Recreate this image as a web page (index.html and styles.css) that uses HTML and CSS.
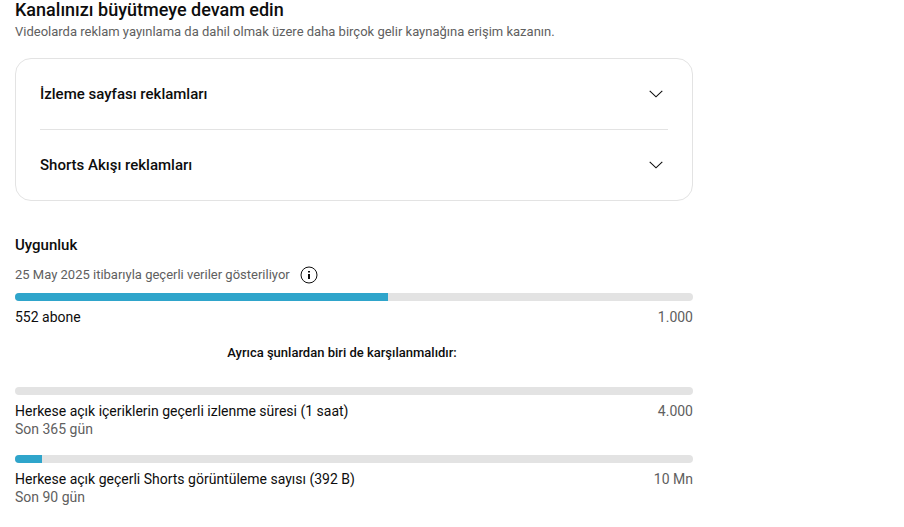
FILE: index.html
```html
<!DOCTYPE html>
<html lang="tr">
<head>
  <meta charset="UTF-8">
  <meta name="viewport" content="width=device-width, initial-scale=1.0">
  <title>Kanalınızı büyütmeye devam edin</title>
  <link rel="stylesheet" href="styles.css">
</head>
<body>
  <main class="container">
    <h1 class="title">Kanalınızı büyütmeye devam edin</h1>
    <p class="subtitle">Videolarda reklam yayınlama da dahil olmak üzere daha birçok gelir kaynağına erişim kazanın.</p>

    <div class="card">
      <button class="card-row" type="button" aria-expanded="false">
        <span>İzleme sayfası reklamları</span>
        <svg class="chevron" viewBox="0 0 24 24" aria-hidden="true"><path d="M5.7 8.8L12 14.8L18.3 8.8"/></svg>
      </button>
      <button class="card-row" type="button" aria-expanded="false">
        <span>Shorts Akışı reklamları</span>
        <svg class="chevron" viewBox="0 0 24 24" aria-hidden="true"><path d="M5.7 8.8L12 14.8L18.3 8.8"/></svg>
      </button>
    </div>

    <h2 class="section-title">Uygunluk</h2>
    <div class="date-row">
      <span>25 May 2025 itibarıyla geçerli veriler gösteriliyor</span>
      <button class="info-btn" type="button" aria-label="Bilgi">
        <svg viewBox="0 0 24 24" aria-hidden="true">
          <circle cx="12" cy="12" r="8"/>
          <path class="info-mark" d="M11 8h2v1.6h-2zM11 11h2v5h-2z"/>
        </svg>
      </button>
    </div>

    <section class="goal">
      <div class="bar" role="progressbar" aria-labelledby="subs" aria-valuenow="552" aria-valuemax="1000">
        <div class="bar-fill" style="width: 55%"></div>
      </div>
      <div class="goal-row">
        <span id="subs">552 abone</span>
        <span class="goal-muted">1.000</span>
      </div>
    </section>

    <p class="either">Ayrıca şunlardan biri de karşılanmalıdır:</p>

    <section class="goal">
      <div class="bar" role="progressbar" aria-labelledby="hours" aria-valuenow="1" aria-valuemax="4000">
        <div class="bar-fill" style="width: 0%"></div>
      </div>
      <div class="goal-row">
        <span id="hours">Herkese açık içeriklerin geçerli izlenme süresi (1 saat)</span>
        <span class="goal-muted">4.000</span>
      </div>
      <div class="goal-muted">Son 365 gün</div>
    </section>

    <section class="goal">
      <div class="bar" role="progressbar" aria-labelledby="shorts" aria-valuenow="392000" aria-valuemax="10000000">
        <div class="bar-fill" style="width: 4%"></div>
      </div>
      <div class="goal-row">
        <span id="shorts">Herkese açık geçerli Shorts görüntüleme sayısı (392 B)</span>
        <span class="goal-muted">10 Mn</span>
      </div>
      <div class="goal-muted">Son 90 gün</div>
    </section>
  </main>
</body>
</html>
```
FILE: styles.css
```css
* {
  box-sizing: border-box;
}

body {
  margin: 0;
  background: #fff;
  color: #0d0d0d;
  font-family: Roboto, Arial, sans-serif;
  font-size: 14px;
  line-height: 18px;
}

h1, h2, p {
  margin: 0;
}

button {
  border: none;
  background: none;
  padding: 0;
  color: inherit;
  font-family: inherit;
  cursor: pointer;
}

.container {
  width: 75%;
  margin-left: 15px;
}

.title {
  font-size: 18px;
  font-weight: 500;
  line-height: 20px;
}

.subtitle {
  margin-top: 2px;
  font-size: 13px;
  line-height: 20px;
  color: #606060;
}

/* Ad type list */
.card {
  margin-top: 16px;
  padding: 0 24px;
  border: 1px solid #e3e3e3;
  border-radius: 16px;
}

.card-row {
  display: flex;
  justify-content: space-between;
  align-items: center;
  width: 100%;
  padding: 23px 0;
  font-size: 15px;
  font-weight: 500;
  line-height: 24px;
  text-align: left;
}

.card-row + .card-row {
  border-top: 1px solid #e3e3e3;
}

.chevron {
  width: 24px;
  height: 24px;
  fill: none;
  stroke: #0d0d0d;
  stroke-width: 1.1;
}

/* Eligibility */
.section-title {
  margin-top: 34px;
  font-size: 15px;
  font-weight: 500;
  line-height: 20px;
}

.date-row {
  display: flex;
  align-items: center;
  gap: 7px;
  margin-top: 8px;
  font-size: 13px;
  color: #606060;
}

.info-btn {
  width: 24px;
  height: 24px;
}

.info-btn svg {
  display: block;
  fill: none;
  stroke: #0d0d0d;
  stroke-width: 1;
}

.info-btn .info-mark {
  fill: #0d0d0d;
  stroke: none;
}

.date-row + .goal {
  margin-top: 6px;
}

.goal + .goal {
  margin-top: 17px;
}

.bar {
  height: 8px;
  margin-bottom: 7px;
  border-radius: 4px;
  background: #e3e3e3;
  overflow: hidden;
}

.bar-fill {
  height: 100%;
  background: #2fa5cb;
}

.goal-row {
  display: flex;
  justify-content: space-between;
  gap: 16px;
}

.goal-muted {
  color: #606060;
}

.either {
  margin: 17px 0 24px;
  padding-right: 24px;
  font-size: 13px;
  font-weight: 500;
  line-height: 20px;
  text-align: center;
}
```
